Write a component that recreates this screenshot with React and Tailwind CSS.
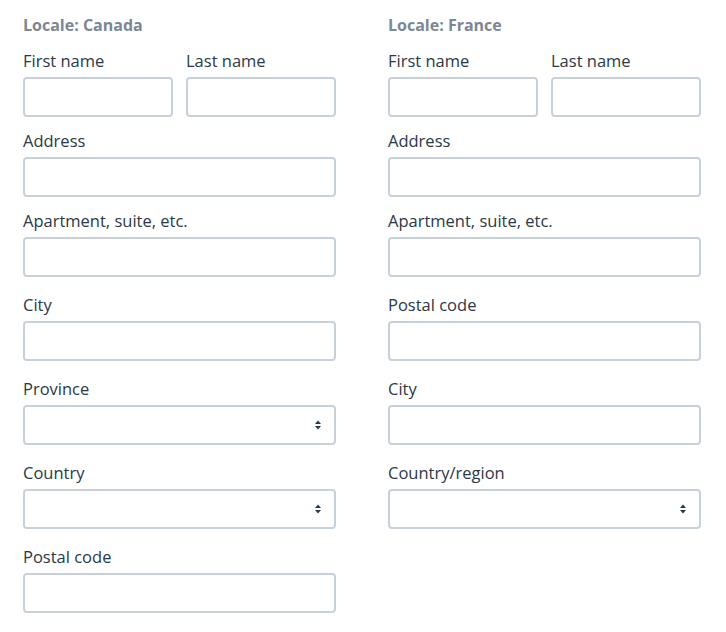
import React from "react";

const canada = [
  [{ label: "First name" }, { label: "Last name" }],
  { label: "Address" },
  { label: "Apartment, suite, etc." },
  { label: "City", gap: true },
  { label: "Province", select: true, gap: true },
  { label: "Country", select: true, gap: true },
  { label: "Postal code", gap: true },
];

const france = [
  [{ label: "First name" }, { label: "Last name" }],
  { label: "Address" },
  { label: "Apartment, suite, etc." },
  { label: "Postal code", gap: true },
  { label: "City", gap: true },
  { label: "Country/region", select: true, gap: true },
];

const Arrows = () => (
  <svg
    className="absolute right-[12px] top-1/2 -translate-y-1/2"
    width="8"
    height="12"
    viewBox="0 0 8 12"
    fill="#2b3a48"
  >
    <path d="M4 1.5 L7 5 H1 Z" />
    <path d="M4 10.5 L7 7 H1 Z" />
  </svg>
);

const Field = ({ label, select }) => (
  <div className="flex flex-col flex-1 min-w-0">
    <label className="block text-[16.5px] leading-[24px] mb-[4px] text-[#2b3845]">
      {label}
    </label>
    <div className="relative h-[40px] rounded-[4px] border-2 border-[#c8d1da] bg-white">
      {select && <Arrows />}
    </div>
  </div>
);

const Column = ({ title, fields }) => (
  <div className="flex flex-col w-[313px]">
    <h2 className="text-[16px] leading-[20px] font-bold text-[#7b8794] mb-[14px]">
      {title}
    </h2>
    {fields.map((f, i) => (
      <div key={i} className={i === 0 ? "" : f.gap ? "mt-[16px]" : "mt-[12px]"}>
        {Array.isArray(f) ? (
          <div className="flex gap-[13px]">
            {f.map((x) => (
              <Field key={x.label} {...x} />
            ))}
          </div>
        ) : (
          <Field {...f} />
        )}
      </div>
    ))}
  </div>
);

export default function App() {
  return (
    <div
      className="w-[726px] h-[632px] bg-white pt-[15px] pl-[23px] flex gap-[52px]"
      style={{ fontFamily: "'Open Sans', 'Liberation Sans', sans-serif" }}
    >
      <Column title="Locale: Canada" fields={canada} />
      <Column title="Locale: France" fields={france} />
    </div>
  );
}
